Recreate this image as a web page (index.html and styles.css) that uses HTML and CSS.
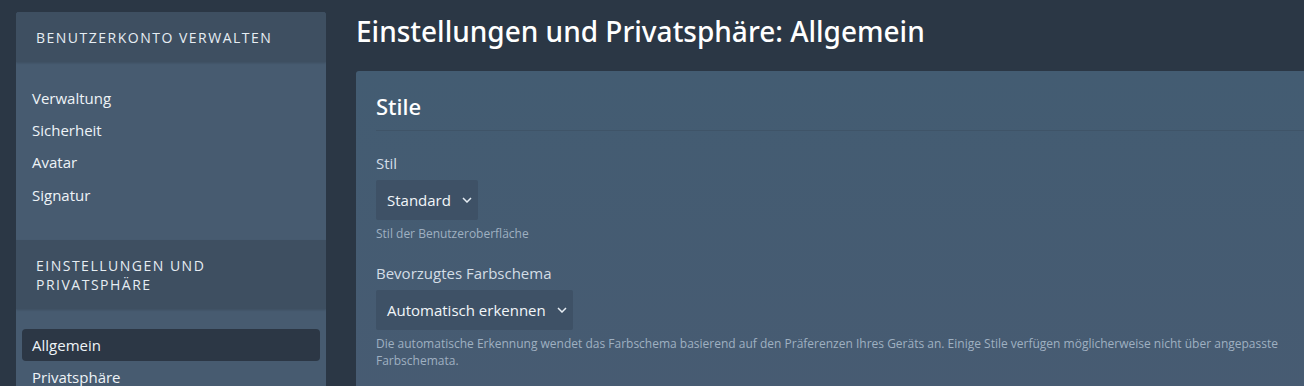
FILE: index.html
```html
<!DOCTYPE html>
<html lang="de">
<head>
  <meta charset="UTF-8" />
  <meta name="viewport" content="width=device-width, initial-scale=1.0"/>
  <title>Einstellungen und Privatsphäre: Allgemein</title>
  <link rel="stylesheet" href="styles.css">
</head>
<body>

  <div class="page">

    <aside class="sidebar">
      <div class="side-head">Benutzerkonto verwalten</div>
      <ul class="side-menu">
        <li><a href="#">Verwaltung</a></li>
        <li><a href="#">Sicherheit</a></li>
        <li><a href="#">Avatar</a></li>
        <li><a href="#">Signatur</a></li>
      </ul>
      <div class="side-head">Einstellungen und Privatsphäre</div>
      <ul class="side-menu">
        <li><a href="#" class="active">Allgemein</a></li>
        <li><a href="#">Privatsphäre</a></li>
      </ul>
    </aside>

    <main class="content">
      <h1>Einstellungen und Privatsphäre: Allgemein</h1>

      <section class="panel">
        <h2>Stile</h2>

        <div class="field">
          <label>Stil</label>
          <div class="select">
            <span>Standard</span>
            <svg width="10" height="6" viewBox="0 0 10 6"><path d="M1 1l4 4 4-4" fill="none" stroke="#e6edf3" stroke-width="1.5"/></svg>
          </div>
          <p class="hint">Stil der Benutzeroberfläche</p>
        </div>

        <div class="field">
          <label>Bevorzugtes Farbschema</label>
          <div class="select">
            <span>Automatisch erkennen</span>
            <svg width="10" height="6" viewBox="0 0 10 6"><path d="M1 1l4 4 4-4" fill="none" stroke="#e6edf3" stroke-width="1.5"/></svg>
          </div>
          <p class="hint">Die automatische Erkennung wendet das Farbschema basierend auf den Präferenzen Ihres Geräts an. Einige Stile verfügen möglicherweise nicht über angepasste Farbschemata.</p>
        </div>
      </section>
    </main>

  </div>

</body>
</html>
```

FILE: styles.css
```css
* {
  box-sizing: border-box;
}

body {
  margin: 0;
  font-family: 'Open Sans', sans-serif;
  background: #2b3745;
  color: #e8eef4;
  overflow: hidden;
}

.page {
  display: flex;
  gap: 30px;
  padding: 12px 0 0 16px;
}

/* sidebar */
.sidebar {
  width: 310px;
  flex-shrink: 0;
  background: #475b70;
  border-radius: 3px;
  overflow: hidden;
}

.side-head {
  background: #3e4f61;
  padding: 16px 20px 15px;
  font-size: 14px;
  line-height: 19px;
  letter-spacing: 1.5px;
  text-transform: uppercase;
  color: #e6edf3;
  box-shadow: 0 1px 2px rgba(0, 0, 0, 0.15);
}

.side-menu {
  list-style: none;
  margin: 0;
  padding: 20px 6px 29px;
}

.side-menu li:nth-child(4) a {
  margin-top: 1px;
}

.side-menu a {
  display: block;
  padding: 0 10px;
  height: 32px;
  line-height: 32px;
  font-size: 15px;
  color: #eef3f7;
  text-decoration: none;
  border-radius: 4px;
}

.side-menu a.active {
  background: #2c3745;
}

/* main */
.content {
  flex: 1;
  min-width: 0;
}

h1,
h2 {
  font-family: 'Noto Sans', 'Open Sans', sans-serif;
  font-weight: 500;
  color: #ffffff;
}

h1 {
  margin: 0 0 21px;
  font-size: 28px;
  line-height: 38px;
}

.panel {
  background: linear-gradient(180deg, #435c72 0%, #485b72 100%);
  border-radius: 3px 0 0 0;
  padding: 18px 20px 30px;
  margin-right: -20px;
  min-height: 400px;
}

h2 {
  margin: 0 0 22px;
  padding-bottom: 7px;
  font-size: 22px;
  line-height: 34px;
  border-bottom: 1px solid #3f5468;
}

.field {
  margin-bottom: 21px;
}

.field label {
  display: block;
  font-size: 15px;
  line-height: 20px;
  color: #d3dde6;
  margin-bottom: 7px;
}

.select {
  display: inline-flex;
  align-items: center;
  gap: 11px;
  height: 40px;
  padding: 0 6px 0 11px;
  background: #3e5166;
  border-radius: 2px;
  font-size: 15px;
  color: #f2f6f9;
}

.hint {
  margin: 5px 0 0;
  font-size: 12px;
  line-height: 17px;
  color: #9fb0c1;
}
```
